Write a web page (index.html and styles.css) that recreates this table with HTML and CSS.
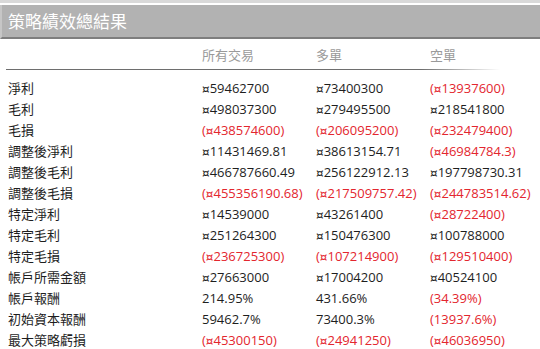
FILE: index.html
```html
<!DOCTYPE html>
<html lang="zh-Hant">
<head>
<meta charset="utf-8">
<title>策略績效總結果</title>
<link rel="stylesheet" href="styles.css">
</head>
<body>
<div class="frame">
  <div class="title">策略績效總結果</div>
  <div class="grid head">
    <div></div>
    <div>所有交易</div>
    <div>多單</div>
    <div>空單</div>
  </div>
  <div class="rule"></div>
  <div class="grid body">
    <div>淨利</div><div><span class="cur">¤</span>59462700</div><div><span class="cur">¤</span>73400300</div><div class="neg">(<span class="cur">¤</span>13937600)</div>
    <div>毛利</div><div><span class="cur">¤</span>498037300</div><div><span class="cur">¤</span>279495500</div><div><span class="cur">¤</span>218541800</div>
    <div>毛損</div><div class="neg">(<span class="cur">¤</span>438574600)</div><div class="neg">(<span class="cur">¤</span>206095200)</div><div class="neg">(<span class="cur">¤</span>232479400)</div>
    <div>調整後淨利</div><div><span class="cur">¤</span>11431469.81</div><div><span class="cur">¤</span>38613154.71</div><div class="neg">(<span class="cur">¤</span>46984784.3)</div>
    <div>調整後毛利</div><div><span class="cur">¤</span>466787660.49</div><div><span class="cur">¤</span>256122912.13</div><div><span class="cur">¤</span>197798730.31</div>
    <div>調整後毛損</div><div class="neg">(<span class="cur">¤</span>455356190.68)</div><div class="neg">(<span class="cur">¤</span>217509757.42)</div><div class="neg">(<span class="cur">¤</span>244783514.62)</div>
    <div>特定淨利</div><div><span class="cur">¤</span>14539000</div><div><span class="cur">¤</span>43261400</div><div class="neg">(<span class="cur">¤</span>28722400)</div>
    <div>特定毛利</div><div><span class="cur">¤</span>251264300</div><div><span class="cur">¤</span>150476300</div><div><span class="cur">¤</span>100788000</div>
    <div>特定毛損</div><div class="neg">(<span class="cur">¤</span>236725300)</div><div class="neg">(<span class="cur">¤</span>107214900)</div><div class="neg">(<span class="cur">¤</span>129510400)</div>
    <div>帳戶所需金額</div><div><span class="cur">¤</span>27663000</div><div><span class="cur">¤</span>17004200</div><div><span class="cur">¤</span>40524100</div>
    <div>帳戶報酬</div><div>214.95%</div><div>431.66%</div><div class="neg">(34.39%)</div>
    <div>初始資本報酬</div><div>59462.7%</div><div>73400.3%</div><div class="neg">(13937.6%)</div>
    <div>最大策略虧損</div><div class="neg">(<span class="cur">¤</span>45300150)</div><div class="neg">(<span class="cur">¤</span>24941250)</div><div class="neg">(<span class="cur">¤</span>46036950)</div>
  </div>
</div>
</body>
</html>
```

FILE: styles.css
```css
html, body {
  margin: 0;
  padding: 0;
  background: #ffffff;
}

body {
  font-family: "Open Sans", "Noto Sans CJK TC", sans-serif;
  font-size: 13px;
  color: #1e1e1e;
}

.frame {
  width: 540px;
  border-top: 3px solid #d9d9d9;
  padding-top: 2px;
}

.title {
  height: 32px;
  line-height: 32px;
  background: #b2b2b2;
  border-left: 2px solid #c6c6c6;
  border-bottom: 2px solid #7e7e7e;
  color: #ffffff;
  font-family: "Noto Sans CJK TC", sans-serif;
  font-size: 17px;
  padding-left: 6px;
}

.grid {
  display: grid;
  grid-template-columns: 194px 114px 114px 1fr;
  grid-auto-rows: 21px;
  padding-left: 8px;
  line-height: 21px;
  white-space: nowrap;
}

.grid > div {
  height: 21px;
  overflow: visible;
}

.head {
  color: #9a9a9a;
  padding-top: 6px;
  padding-bottom: 3px;
}

.rule {
  margin-left: 6px;
  width: 494px;
  height: 1px;
  background: linear-gradient(to right, #6e6e6e 0%, #6e6e6e 84%, rgba(110, 110, 110, 0) 100%);
}

.body {
  padding-top: 8px;
}

.cur {
  font-family: "DejaVu Sans", sans-serif;
  font-size: 12px;
  line-height: 1;
}

.neg {
  color: #e3262e;
}
```
